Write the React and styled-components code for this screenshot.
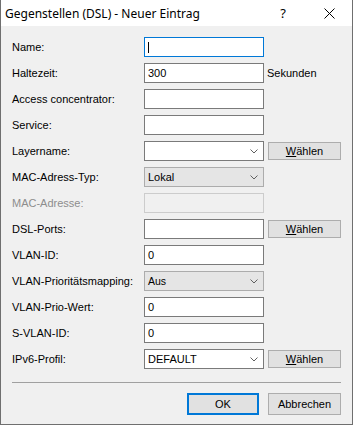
import React from "react";
import styled, { createGlobalStyle } from "styled-components";

const GlobalStyle = createGlobalStyle`
  html, body { margin: 0; padding: 0; background: #ffffff; }
  * { box-sizing: border-box; }
`;

const Window = styled.div`
  width: 353px;
  height: 425px;
  border: 1px solid #6f6f6f;
  border-top: none;
  background: #f0f0f0;
  display: flex;
  flex-direction: column;
  font-family: "Liberation Sans", Arial, sans-serif;
  font-size: 11px;
  color: #000;
`;

const TitleBar = styled.div`
  height: 26px;
  background: #ffffff;
  display: flex;
  align-items: center;
  padding-left: 4px;
`;

const Title = styled.div`
  font-family: "Noto Sans", "Open Sans", sans-serif;
  font-size: 12px;
  flex: 1;
  color: #000;
`;

const Help = styled.div`
  font-family: "Noto Sans", sans-serif;
  font-size: 13px;
  width: 46px;
  text-align: center;
`;

const Close = styled.div`
  width: 46px;
  height: 26px;
  display: flex;
  align-items: center;
  justify-content: center;
`;

const Form = styled.div`
  display: grid;
  grid-template-columns: 128px 120px 73px;
  grid-auto-rows: 20px;
  column-gap: 4px;
  row-gap: 6px;
  padding: 11px 11px 0 11px;
`;

const Label = styled.div`
  display: flex;
  align-items: center;
  color: ${(p) => (p.$disabled ? "#8d8d8d" : "#000")};
  white-space: nowrap;
`;

const Field = styled.div`
  position: relative;
  height: 20px;
  border: 1px solid ${(p) => (p.$focused ? "#0078d7" : p.$disabled ? "#cccccc" : p.$select ? "#acacac" : "#7a7a7a")};
  background: ${(p) => (p.$disabled ? "#f0f0f0" : p.$select ? "#e5e5e5" : "#ffffff")};
  display: flex;
  align-items: center;
  padding: 0 3px;
  white-space: nowrap;
`;

const FieldText = styled.span`
  flex: 1;
  font-size: ${(p) => (p.$small ? "10.5px" : "11px")};
`;

const Caret = styled.span`
  width: 1px;
  height: 11px;
  background: #000;
`;

const Chevron = styled.svg`
  width: 8px;
  height: 5px;
  margin-right: 2px;
  flex: none;
`;

const After = styled.div`
  display: flex;
  align-items: center;
  white-space: nowrap;
  margin-left: -1px;
`;

const SmallButton = styled.div`
  height: 18px;
  align-self: center;
  border: 1px solid #adadad;
  background: #e1e1e1;
  display: flex;
  align-items: center;
  justify-content: center;
`;

const Underline = styled.span`
  text-decoration: underline;
`;

const Separator = styled.div`
  margin: 13px 11px 0 11px;
  height: 1px;
  background: #a0a0a0;
`;

const Footer = styled.div`
  display: flex;
  justify-content: flex-end;
  gap: 9px;
  padding: 10px 11px 0 0;
`;

const DialogButton = styled.div`
  width: ${(p) => (p.$default ? "72px" : "73px")};
  height: 22px;
  border: ${(p) => (p.$default ? "2px solid #0078d7" : "1px solid #adadad")};
  background: #e1e1e1;
  display: flex;
  align-items: center;
  justify-content: center;
`;

const ChevronIcon = () => (
  <Chevron viewBox="0 0 8 5">
    <polyline points="0.5,0.5 4,4 7.5,0.5" fill="none" stroke="#606060" strokeWidth="1" />
  </Chevron>
);

const Waehlen = () => (
  <SmallButton>
    <span>
      <Underline>W</Underline>ählen
    </span>
  </SmallButton>
);

const Empty = () => <div />;

export default function App() {
  return (
    <>
      <GlobalStyle />
      <Window>
        <TitleBar>
          <Title>Gegenstellen (DSL) - Neuer Eintrag</Title>
          <Help>?</Help>
          <Close>
            <svg width="11" height="11" viewBox="0 0 11 11">
              <path d="M0.5 0.5 L10.5 10.5 M10.5 0.5 L0.5 10.5" stroke="#000" strokeWidth="1" fill="none" />
            </svg>
          </Close>
        </TitleBar>
        <Form>
          <Label>Name:</Label>
          <Field $focused>
            <Caret />
          </Field>
          <Empty />

          <Label>Haltezeit:</Label>
          <Field>
            <FieldText>300</FieldText>
          </Field>
          <After>Sekunden</After>

          <Label>Access concentrator:</Label>
          <Field />
          <Empty />

          <Label>Service:</Label>
          <Field />
          <Empty />

          <Label>Layername:</Label>
          <Field>
            <FieldText />
            <ChevronIcon />
          </Field>
          <Waehlen />

          <Label>MAC-Adress-Typ:</Label>
          <Field $select>
            <FieldText>Lokal</FieldText>
            <ChevronIcon />
          </Field>
          <Empty />

          <Label $disabled>MAC-Adresse:</Label>
          <Field $disabled />
          <Empty />

          <Label>DSL-Ports:</Label>
          <Field />
          <Waehlen />

          <Label>VLAN-ID:</Label>
          <Field>
            <FieldText>0</FieldText>
          </Field>
          <Empty />

          <Label>VLAN-Prioritätsmapping:</Label>
          <Field $select>
            <FieldText $small>Aus</FieldText>
            <ChevronIcon />
          </Field>
          <Empty />

          <Label>VLAN-Prio-Wert:</Label>
          <Field>
            <FieldText>0</FieldText>
          </Field>
          <Empty />

          <Label>S-VLAN-ID:</Label>
          <Field>
            <FieldText>0</FieldText>
          </Field>
          <Empty />

          <Label>IPv6-Profil:</Label>
          <Field>
            <FieldText>DEFAULT</FieldText>
            <ChevronIcon />
          </Field>
          <Waehlen />
        </Form>
        <Separator />
        <Footer>
          <DialogButton $default>OK</DialogButton>
          <DialogButton>Abbrechen</DialogButton>
        </Footer>
      </Window>
    </>
  );
}
